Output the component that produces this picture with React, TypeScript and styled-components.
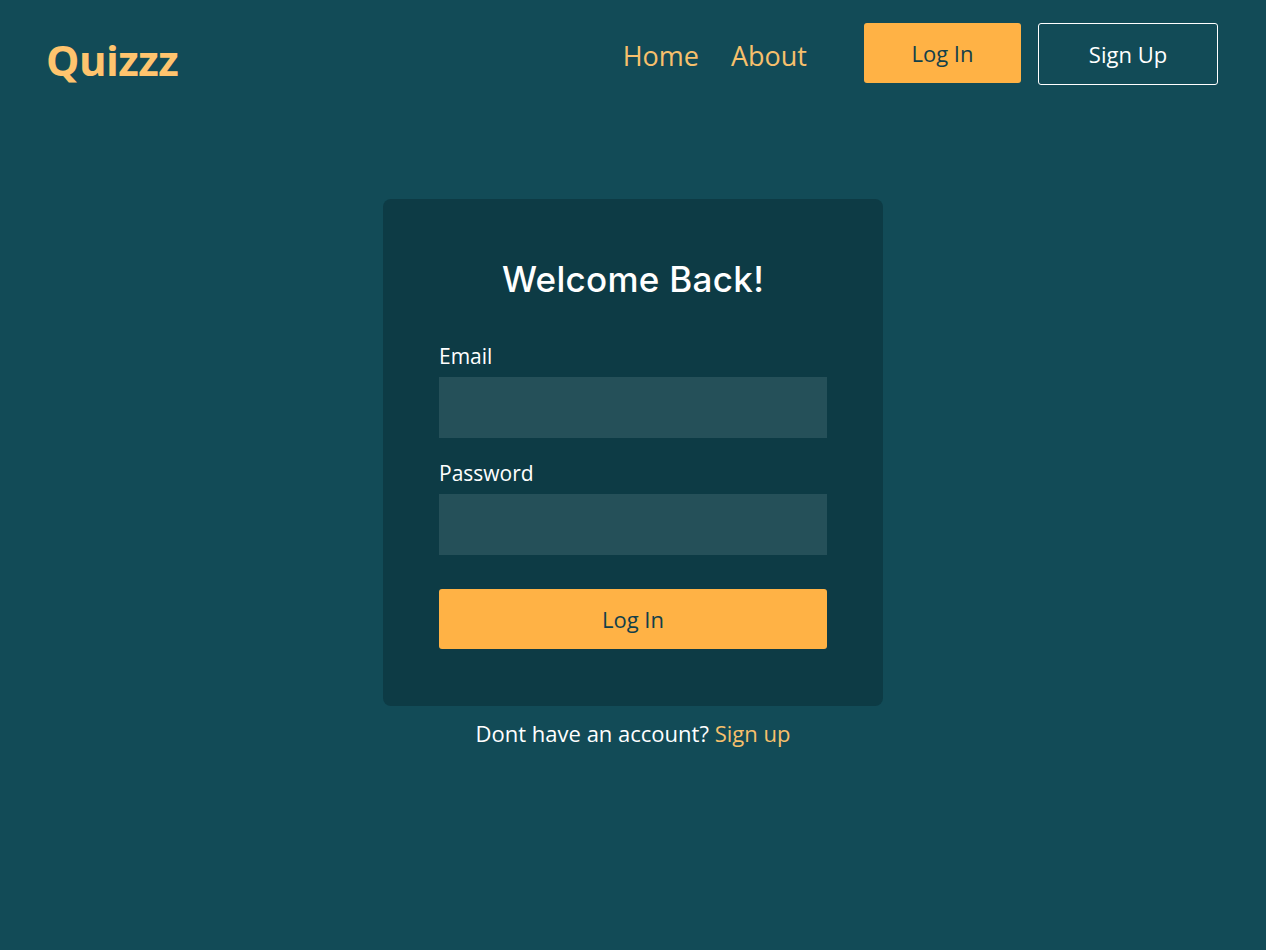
import React from "react";
import styled, { createGlobalStyle } from "styled-components";

const GlobalStyle = createGlobalStyle`
  * {
    box-sizing: border-box;
  }
  body {
    margin: 0;
    background-color: #124b57;
    font-family: "Open Sans", "Noto Sans", sans-serif;
    color: #fff;
  }
`;

const Page = styled.div`
  min-height: 950px;
  display: flex;
  flex-direction: column;
`;

const Header = styled.header`
  display: flex;
  align-items: center;
  justify-content: space-between;
  padding: 19px 48px 0 46px;
`;

const Logo = styled.a`
  font-size: 42px;
  font-weight: 700;
  color: #ffc46e;
  text-decoration: none;
  margin-top: 12px;
  letter-spacing: -0.5px;
`;

const Nav = styled.nav`
  display: flex;
  align-items: center;
`;

const NavLink = styled.a`
  font-size: 27px;
  color: #f7c06c;
  text-decoration: none;
  margin-right: 32px;
  margin-top: 4px;
`;

const HeaderButton = styled.button<{ $outline?: boolean }>`
  font-family: inherit;
  font-size: 22px;
  height: ${(p) => (p.$outline ? "62px" : "60px")};
  width: ${(p) => (p.$outline ? "180px" : "157px")};
  margin-left: ${(p) => (p.$outline ? "17px" : "25px")};
  margin-bottom: ${(p) => (p.$outline ? "0" : "2px")};
  border-radius: 3px;
  cursor: pointer;
  color: ${(p) => (p.$outline ? "#fff" : "#12404a")};
  background-color: ${(p) => (p.$outline ? "transparent" : "#ffb245")};
  border: ${(p) => (p.$outline ? "1px solid #fff" : "none")};
`;

const Main = styled.main`
  display: flex;
  flex-direction: column;
  align-items: center;
  padding-top: 111px;
`;

const Card = styled.form`
  width: 500px;
  background-color: #0d3b45;
  border-radius: 8px;
  padding: 56px 56px 57px;
  display: flex;
  flex-direction: column;
`;

const Title = styled.h1`
  font-family: "Inter", "Noto Sans", sans-serif;
  font-weight: 500;
  font-size: 35px;
  text-align: center;
  margin: 3px 0 42px;
  color: #fff;
  letter-spacing: 0.3px;
`;

const Label = styled.label`
  font-size: 21px;
  color: #fff;
  margin-bottom: 7px;
`;

const Input = styled.input<{ $last?: boolean }>`
  height: 61px;
  width: 100%;
  border: none;
  outline: none;
  background-color: #255059;
  color: #fff;
  font-family: inherit;
  font-size: 20px;
  padding: 0 12px;
  margin-bottom: ${(p) => (p.$last ? "34px" : "21px")};
`;

const SubmitButton = styled.button`
  height: 60px;
  width: 100%;
  border: none;
  border-radius: 3px;
  background-color: #ffb245;
  color: #12404a;
  font-family: inherit;
  font-size: 22px;
  cursor: pointer;
`;

const Footer = styled.p`
  margin: 12px 0 0;
  font-size: 22px;
  color: #fff;
`;

const FooterLink = styled.a`
  color: #f7c06c;
  text-decoration: none;
`;

export default function App() {
  return (
    <>
      <GlobalStyle />
      <Page>
        <Header>
          <Logo href="#">Quizzz</Logo>
          <Nav>
            <NavLink href="#">Home</NavLink>
            <NavLink href="#">About</NavLink>
            <HeaderButton type="button">Log In</HeaderButton>
            <HeaderButton type="button" $outline>
              Sign Up
            </HeaderButton>
          </Nav>
        </Header>
        <Main>
          <Card onSubmit={(e) => e.preventDefault()}>
            <Title>Welcome Back!</Title>
            <Label htmlFor="email">Email</Label>
            <Input id="email" type="email" />
            <Label htmlFor="password">Password</Label>
            <Input id="password" type="password" $last />
            <SubmitButton type="submit">Log In</SubmitButton>
          </Card>
          <Footer>
            Dont have an account? <FooterLink href="#">Sign up</FooterLink>
          </Footer>
        </Main>
      </Page>
    </>
  );
}
